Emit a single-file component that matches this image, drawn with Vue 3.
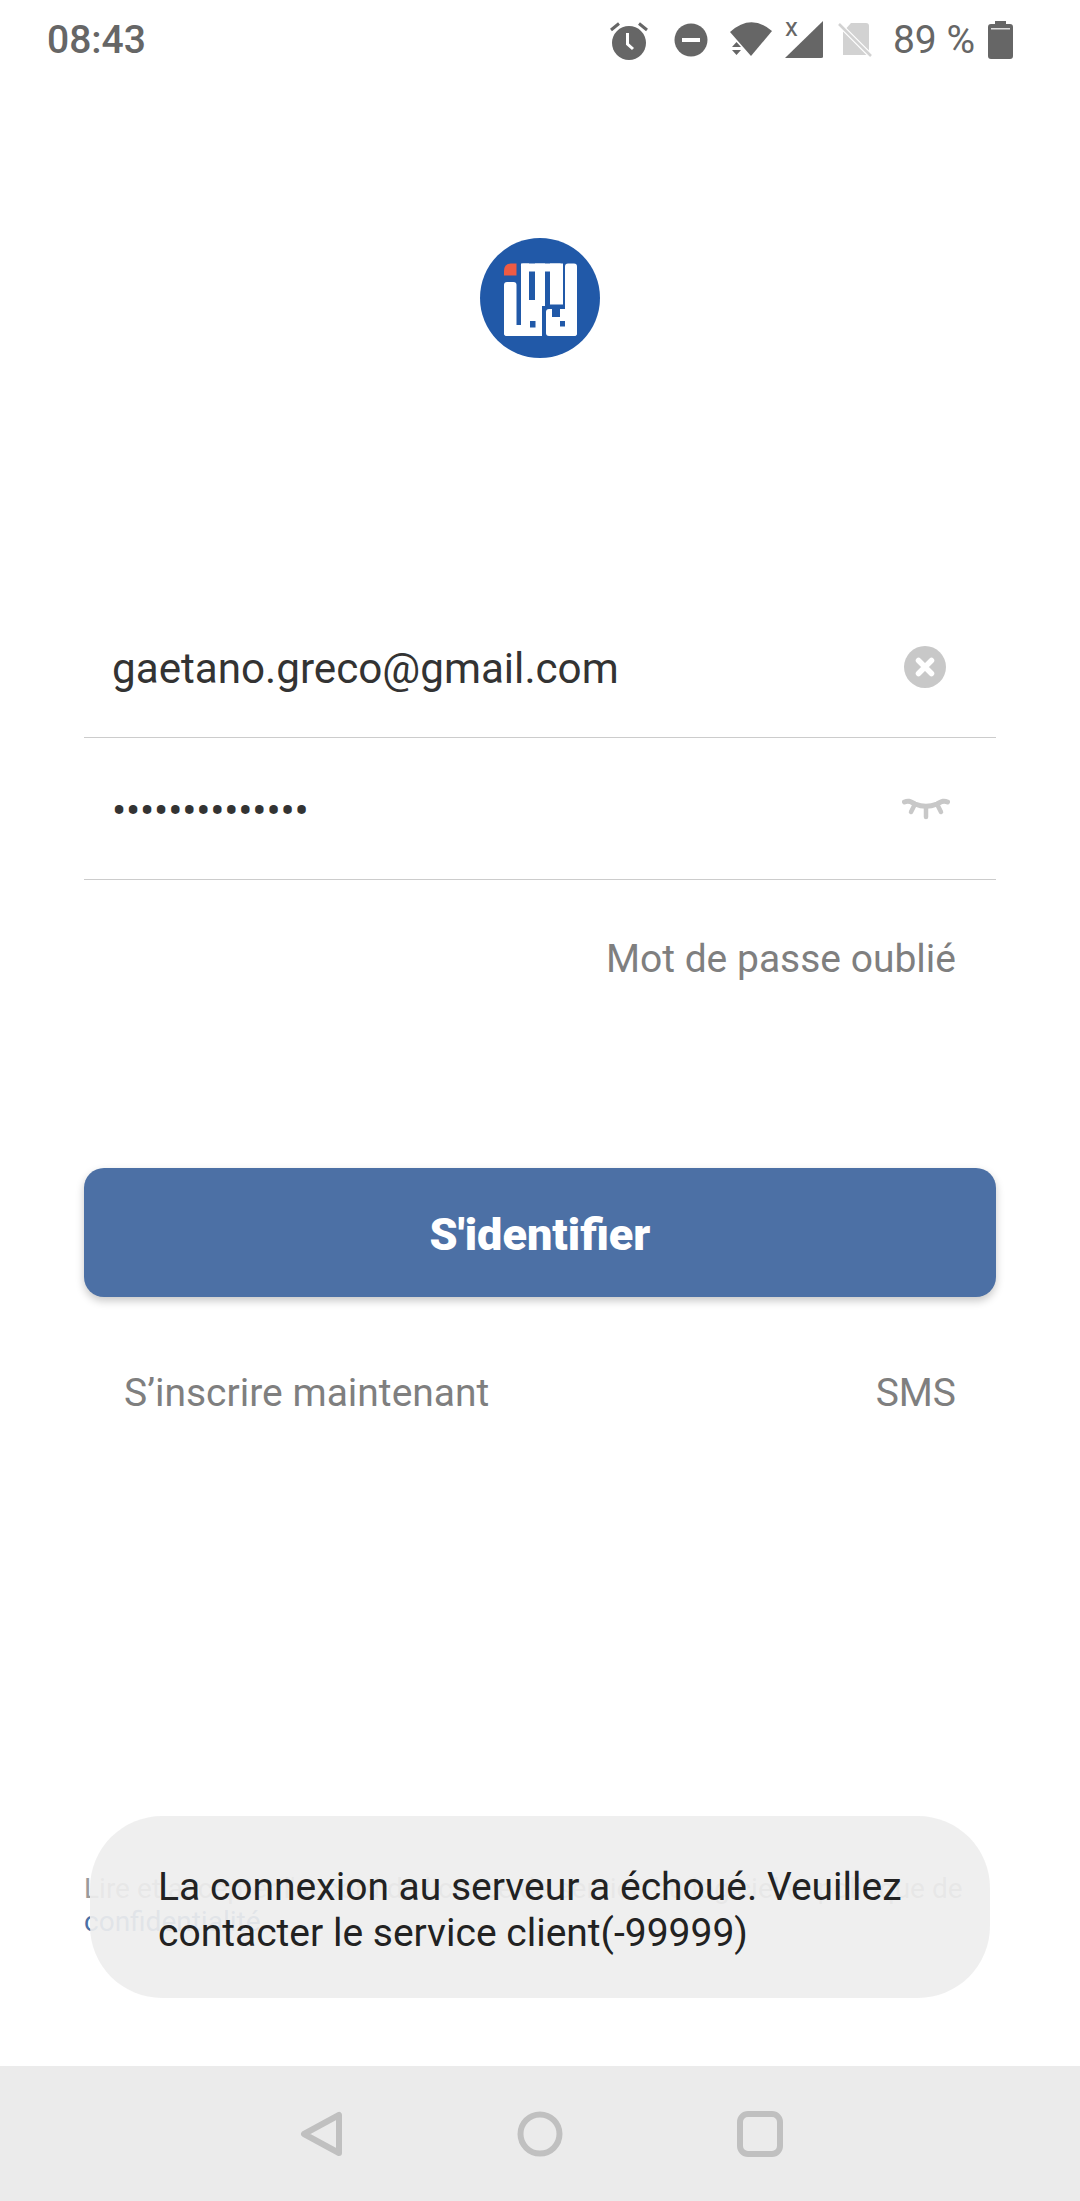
<template>
  <div class="screen">
    <header class="status">
      <span class="clock">08:43</span>
      <div class="status-icons">
        <!-- alarm -->
        <svg width="40" height="40" viewBox="0 0 40 40" class="ic-alarm">
          <circle cx="20" cy="23" r="17" fill="#666" />
          <path d="M2 10 L10 3.5 M38 10 L30 3.5" stroke="#666" stroke-width="3" />
          <path d="M18.5 13 V24 L24 29" stroke="#fff" stroke-width="3" fill="none" />
        </svg>
        <!-- do not disturb -->
        <svg width="34" height="34" viewBox="0 0 34 34" class="ic-dnd">
          <circle cx="17" cy="17" r="16.5" fill="#666" />
          <rect x="8" y="15" width="18" height="4" fill="#fff" />
        </svg>
        <!-- wifi with activity arrows -->
        <svg width="42" height="36" viewBox="0 0 42 36" class="ic-wifi">
          <path d="M0 10 Q21 -9 42 9 L21 34 Z" fill="#666" />
          <path d="M2 25 H11 L6.5 20 Z M2 28 H11 L6.5 33 Z" fill="#666" />
        </svg>
        <!-- mobile signal, no data -->
        <svg width="38" height="38" viewBox="0 0 38 38" class="ic-signal">
          <path d="M38 0 V36 Q38 37 36 37 H0 Z" fill="#666" />
          <text x="0" y="15" class="x-mark">x</text>
        </svg>
        <!-- no sim -->
        <svg width="34" height="34" viewBox="0 0 34 34" class="ic-sim">
          <path d="M5 9 L13 0 H28 Q31 0 31 3 V32 H5 Z" fill="#d2d2d2" />
          <path d="M0 0 L33 33" stroke="#fff" stroke-width="5" />
          <path d="M1 1 L33 33" stroke="#d2d2d2" stroke-width="2.5" />
        </svg>
        <span class="batt-text">89 %</span>
        <!-- battery -->
        <svg width="25" height="38" viewBox="0 0 25 38" class="ic-batt">
          <path d="M7 0 H18 V3 H22 Q25 3 25 6 V35 Q25 38 22 38 H3 Q0 38 0 35 V6 Q0 3 3 3 H7 Z" fill="#666" />
          <rect x="3" y="7" width="19" height="1.5" fill="#ddd" />
        </svg>
      </div>
    </header>

    <div class="logo">
      <svg width="120" height="120" viewBox="0 0 120 120">
        <circle cx="60" cy="60" r="60" fill="#2159a8" />
        <path d="M24 37.5 V33 Q24 26 31 25.5 H36.5 V37.5 Z" fill="#ee5b44" />
        <!-- white block letters -->
        <g fill="#fff">
          <rect x="24" y="44" width="12.5" height="54" rx="3" />
          <rect x="24" y="87" width="38" height="11" rx="3" />
          <rect x="41" y="25.5" width="41" height="8" rx="2" />
          <rect x="41" y="25.5" width="8" height="66" />
          <rect x="55" y="25.5" width="10" height="41" />
          <rect x="41" y="62" width="24" height="6" />
          <rect x="41" y="66" width="21" height="32" />
          <rect x="70" y="25.5" width="13" height="41" />
          <rect x="85" y="25.5" width="12" height="72.5" rx="3" />
          <rect x="66" y="71" width="31" height="27" rx="3" />
        </g>
        <g fill="#2159a8">
          <rect x="72" y="71" width="8" height="8" />
          <rect x="50" y="83" width="5.5" height="6.5" />
          <rect x="80" y="83" width="5" height="5.5" />
        </g>
      </svg>
    </div>

    <form class="login" @submit.prevent>
      <div class="field">
        <span class="value">gaetano.greco@gmail.com</span>
        <svg width="42" height="42" viewBox="0 0 42 42">
          <circle cx="21" cy="21" r="21" fill="#c8c8c8" />
          <path d="M14.5 14.5 L27.5 27.5 M27.5 14.5 L14.5 27.5" stroke="#fff" stroke-width="5.5" stroke-linecap="round" />
        </svg>
      </div>
      <div class="field">
        <span class="value dots">••••••••••••••</span>
        <svg width="48" height="22" viewBox="0 0 48 22" class="eye">
          <path d="M2.5 4 C7 2 9 4 13 6 C20 9 28 9 35 6 C39 4 41 2 45.5 4" fill="none" stroke="#c8c8c8" stroke-width="5" stroke-linecap="round" />
          <path d="M12 8 L9 14 M24 10 V19 M36 8 L39 14" fill="none" stroke="#c8c8c8" stroke-width="4.5" stroke-linecap="round" />
        </svg>
      </div>
      <a class="forgot">Mot de passe oublié</a>
      <button class="submit" type="button">S'identifier</button>
      <div class="links">
        <a>S’inscrire maintenant</a>
        <a>SMS</a>
      </div>
    </form>

    <p class="terms">
      Lire et accepter l'accord de licence de service du logiciel et politique de
      <span class="terms-link">confidentialité</span>
    </p>

    <div class="toast">La connexion au serveur a échoué. Veuillez contacter le service client(-99999)</div>

    <nav class="navbar">
      <svg width="46" height="46" viewBox="0 0 46 46">
        <path d="M42 4 V42 L7 23 Z" fill="none" stroke="#c0c0c0" stroke-width="6" stroke-linejoin="round" />
      </svg>
      <svg width="46" height="46" viewBox="0 0 46 46">
        <circle cx="23" cy="23" r="19.5" fill="none" stroke="#c0c0c0" stroke-width="6" />
      </svg>
      <svg width="46" height="46" viewBox="0 0 46 46">
        <rect x="3" y="3" width="40" height="40" rx="8" fill="none" stroke="#c0c0c0" stroke-width="6" />
      </svg>
    </nav>
  </div>
</template>

<script setup>
</script>

<style>
html,
body {
  margin: 0;
  background: #fff;
}
</style>

<style scoped>
.screen {
  position: relative;
  width: 1080px;
  height: 2201px;
  display: flex;
  flex-direction: column;
  overflow: hidden;
  background: #fff;
  font-family: Roboto, "Liberation Sans", sans-serif;
}

.status {
  height: 80px;
  flex: none;
  display: flex;
  align-items: center;
  justify-content: space-between;
  padding: 0 67px 0 47px;
  box-sizing: border-box;
  color: #666;
  font-size: 39px;
}
.clock {
  font-weight: 500;
}
.status-icons {
  display: flex;
  align-items: center;
}
.status-icons svg {
  display: block;
}
.ic-dnd {
  margin-left: 25px;
}
.ic-wifi {
  margin-left: 22px;
}
.ic-signal {
  margin-left: 13px;
}
.ic-sim {
  margin-left: 15px;
}
.batt-text {
  margin-left: 21px;
}
.ic-batt {
  margin-left: 13px;
}
.x-mark {
  font-size: 26px;
  fill: #666;
}

.logo {
  display: flex;
  justify-content: center;
  margin-top: 158px;
}

.login {
  display: flex;
  flex-direction: column;
  margin: 238px 84px 0;
}
.field {
  height: 142px;
  flex: none;
  display: flex;
  align-items: center;
  justify-content: space-between;
  padding: 0 50px 0 28px;
  border-bottom: 1px solid #ccc;
  box-sizing: border-box;
}
.value {
  padding-top: 3px;
  font-size: 42.2px;
  color: #333;
}
.dots {
  letter-spacing: -0.2px;
}
.eye {
  margin-right: -4px;
}
.forgot {
  align-self: flex-end;
  margin: 56px 40px 0 0;
  font-size: 39px;
  color: #7f7f7f;
}
.submit {
  height: 129px;
  margin-top: 186px;
  padding: 3px 0 0;
  border: 0;
  border-radius: 20px;
  background: #4c70a5;
  color: #fff;
  font-family: inherit;
  font-size: 45px;
  font-weight: 900;
  box-shadow: 0 4px 8px rgba(0, 0, 0, 0.22);
}
.links {
  display: flex;
  justify-content: space-between;
  margin-top: 73px;
  padding: 0 40px;
  font-size: 39px;
  color: #7f7f7f;
}

.terms {
  margin: 456px 84px 0;
  font-size: 28px;
  line-height: 33px;
  color: #9a9a9a;
}
.terms-link {
  color: #4c70a5;
}

.toast {
  position: absolute;
  left: 90px;
  top: 1816px;
  width: 900px;
  height: 182px;
  padding: 5px 60px 0 68px;
  box-sizing: border-box;
  display: flex;
  align-items: center;
  border-radius: 72px;
  background: rgba(238, 238, 238, 0.92);
  color: #222;
  font-size: 39px;
  line-height: 46px;
}

.navbar {
  margin-top: auto;
  height: 135px;
  flex: none;
  display: flex;
  align-items: center;
  justify-content: center;
  gap: 174px;
  background: #ebebeb;
}
</style>
